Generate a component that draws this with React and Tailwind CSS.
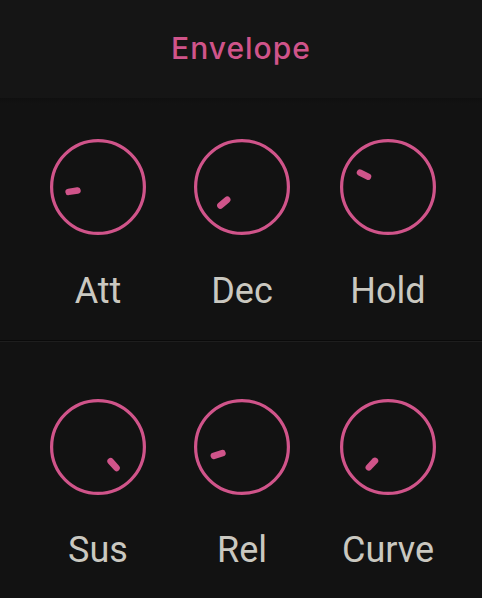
import React from "react";

const PINK = "#d0548a";

function Knob({ angle, r }) {
  const rad = (angle * Math.PI) / 180;
  const dx = Math.sin(rad);
  const dy = -Math.cos(rad);
  const cx = 50 + dx * r;
  const cy = 50 + dy * r;
  const h = 4.5;
  return (
    <svg width="100" height="100" viewBox="0 0 100 100" className="block">
      <circle cx="50" cy="50" r="46.4" fill="none" stroke={PINK} strokeWidth="3.2" />
      <line
        x1={cx - dx * h}
        y1={cy - dy * h}
        x2={cx + dx * h}
        y2={cy + dy * h}
        stroke={PINK}
        strokeWidth="6.5"
        strokeLinecap="round"
      />
    </svg>
  );
}

function Cell({ label, angle, r, gap }) {
  return (
    <div className="w-[144px] flex flex-col items-center">
      <Knob angle={angle} r={r} />
      <div
        className={`${gap} text-[36px] leading-[36px] text-[#cac8c0]`}
        style={{ fontFamily: "Roboto, 'Noto Sans', sans-serif" }}
      >
        {label}
      </div>
    </div>
  );
}

export default function App() {
  return (
    <div
      className="w-[482px] h-[598px] bg-[#121212] overflow-hidden flex flex-col"
      style={{ fontFamily: "Inter, 'Noto Sans', sans-serif" }}
    >
      <div className="h-[98px] bg-[#151515] flex items-center justify-center shrink-0">
        <div className="text-[30px] leading-[30px] font-medium text-[#d0548a] tracking-[1px] -mt-[2px]">
          Envelope
        </div>
      </div>
      <div className="h-[243px] bg-gradient-to-b from-[#0f0f0f] via-[#121212] to-[#121212] bg-[length:100%_12px] bg-no-repeat border-b border-[#0a0a0a] shrink-0">
        <div className="pl-[26px] pt-[39px] flex">
          <Cell label="Att" angle={-99.5} r={25.3} gap="mt-[36px]" />
          <Cell label="Dec" angle={-130.7} r={24} gap="mt-[36px]" />
          <div className="ml-[2px]">
            <Cell label="Hold" angle={-62.7} r={27} gap="mt-[36px]" />
          </div>
        </div>
      </div>
      <div className="flex-1 border-t border-[#1e1e1e]">
        <div className="pl-[26px] pt-[55px] flex">
          <Cell label="Sus" angle={138.5} r={23.5} gap="mt-[35px]" />
          <Cell label="Rel" angle={-107.4} r={25} gap="mt-[35px]" />
          <div className="ml-[2px]">
            <Cell label="Curve" angle={-136.7} r={23.5} gap="mt-[35px]" />
          </div>
        </div>
      </div>
    </div>
  );
}
